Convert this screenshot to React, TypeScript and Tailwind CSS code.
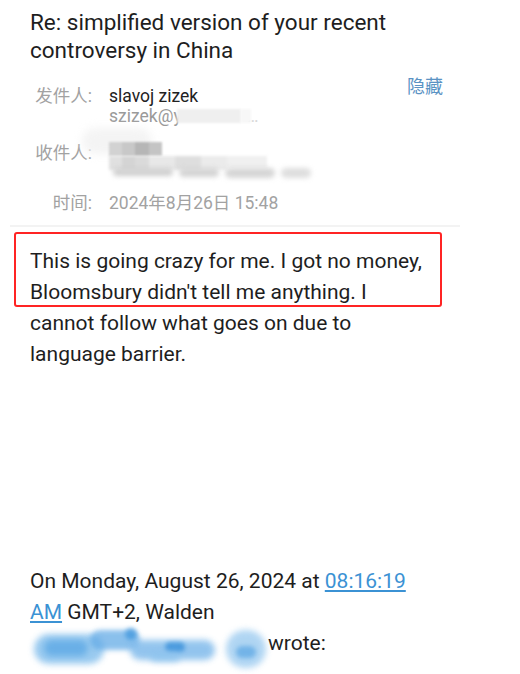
import React from "react";

export default function App() {
  return (
    <div className="w-[520px] h-[674px] bg-white overflow-hidden text-[#222]" style={{ fontFamily: "Roboto, 'Noto Sans CJK SC', sans-serif" }}>
      {/* Title */}
      <div className="pl-[30px] pt-[8px] w-[440px] text-[22.5px] leading-[28px] text-[#1e1e1e]">
        Re: simplified version of your recent controversy in China
      </div>

      {/* Meta */}
      <div className="mt-[22px] w-[460px] text-[17.5px] leading-[20px]">
        <div className="flex">
          <div className="w-[92px] text-right text-[#a2a2a2] shrink-0">发件人:</div>
          <div className="pl-[17px] flex-1">
            <div className="text-[#222]">slavoj zizek</div>
            <div className="text-[#9a9a9a] flex items-center">
              <span>szizek@y</span>
              <span className="ml-[-5px] inline-block w-[64px] h-[14px] bg-[#efefef] blur-[1px]" />
              <span className="inline-block w-[10px] h-[14px] bg-[#f7f7f7] blur-[1px]" />
              <span className="text-[#d8d8d8] -ml-[4px]">…</span>
            </div>
          </div>
          <div className="text-[18px] text-[#5b93c4] pr-[17px] -mt-[9px]">隐藏</div>
        </div>

        <div className="flex mt-[14px]">
          <div className="w-[92px] text-right text-[#a2a2a2] shrink-0 pt-[3px]">收件人:</div>
          <div className="pl-[3px] flex-1 relative h-[46px]">
            <div className="absolute left-[-10px] top-[-12px] w-[70px] h-[26px] rounded-full bg-[#f4f4f4] blur-[4px]" />
            <div className="relative flex mt-[2px] ml-[14px] blur-[1px]">
              <div className="w-[13px] h-[14px] bg-[#d2d2d2]" />
              <div className="w-[13px] h-[14px] bg-[#c8c8c8]" />
              <div className="w-[14px] h-[14px] bg-[#b6b6b6]" />
              <div className="w-[13px] h-[14px] bg-[#c4c4c4]" />
            </div>
            <div className="relative flex ml-[14px] blur-[1.5px]">
              <div className="w-[13px] h-[14px] bg-[#e0e0e0]" />
              <div className="w-[13px] h-[14px] bg-[#d4d4d4]" />
              <div className="w-[14px] h-[14px] bg-[#dadada]" />
              <div className="w-[26px] h-[14px] bg-[#e8e8e8]" />
              <div className="w-[26px] h-[14px] bg-[#dedede]" />
              <div className="w-[26px] h-[14px] bg-[#ebebeb]" />
              <div className="w-[40px] h-[12px] bg-[#f0f0f0]" />
            </div>
            <div className="relative flex gap-[6px] mt-[-2px] ml-[18px] blur-[2.5px]">
              <div className="w-[60px] h-[8px] rounded-full bg-[#cfcfcf]" />
              <div className="w-[40px] h-[9px] rounded-full bg-[#d4d4d4]" />
              <div className="w-[50px] h-[10px] rounded-full bg-[#d6d6d6]" />
              <div className="w-[30px] h-[10px] rounded-full bg-[#dedede]" />
            </div>
          </div>
        </div>

        <div className="flex mt-[7px] text-[#a2a2a2]">
          <div className="w-[92px] text-right shrink-0">时间:</div>
          <div className="pl-[17px]">2024年8月26日 15:48</div>
        </div>
      </div>

      {/* Divider */}
      <div className="mt-[12px] ml-[10px] w-[450px] h-[2px] bg-[#f3f3f3]" />

      {/* Body */}
      <div className="relative mt-[5px] pt-[14px]">
        <div className="absolute top-0 left-[14px] w-[428px] h-[75px] border-[2.5px] border-[#ff2424] rounded-[3px]" />
        <p className="pl-[30px] w-[432px] text-[21px] leading-[31px] text-[#1e1e1e]">
          This is going crazy for me. I got no money, Bloomsbury didn't tell me anything. I cannot follow what goes on due to language barrier.
        </p>
      </div>

      {/* Quote */}
      <div className="mt-[196px] pl-[30px] w-[440px] text-[21px] leading-[31px] text-[#1e1e1e]">
        <div>
          On Monday, August 26, 2024 at <span className="text-[#3b92d4] underline underline-offset-2">08:16:19</span>{" "}
          <span className="text-[#3b92d4] underline underline-offset-2">AM</span> GMT+2, Walden
        </div>
        <div className="flex items-center">
          <div className="relative w-[238px] h-[31px] shrink-0">
            <div className="absolute left-[4px] top-[6px] w-[70px] h-[30px] rounded-full bg-[#80bdec] blur-[3px] opacity-80" />
            <div className="absolute left-[14px] top-[12px] w-[44px] h-[16px] rounded-full bg-[#4a9ee2] blur-[3px] opacity-60" />
            <div className="absolute left-[60px] top-[2px] w-[50px] h-[20px] rounded-full bg-[#64abe6] blur-[2.5px] opacity-75" />
            <div className="absolute left-[95px] top-[0px] w-[12px] h-[12px] rounded-full bg-[#3b94dc] blur-[2px] opacity-70" />
            <div className="absolute left-[100px] top-[12px] w-[85px] h-[20px] rounded-full bg-[#78b6ea] blur-[3px] opacity-80" />
            <div className="absolute left-[135px] top-[14px] w-[20px] h-[10px] rounded-full bg-[#2e8ad8] blur-[2px] opacity-70" />
            <div className="absolute left-[120px] top-[24px] w-[30px] h-[10px] rounded-full bg-[#8cc3ee] blur-[3px] opacity-70" />
            <div className="absolute left-[196px] top-[2px] w-[40px] h-[38px] rounded-full bg-[#9ccbf0] blur-[3px] opacity-80" />
            <div className="absolute left-[206px] top-[18px] w-[20px] h-[12px] rounded-full bg-[#5aa6e4] blur-[2px] opacity-70" />
          </div>
          <span>wrote:</span>
        </div>
      </div>
    </div>
  );
}
